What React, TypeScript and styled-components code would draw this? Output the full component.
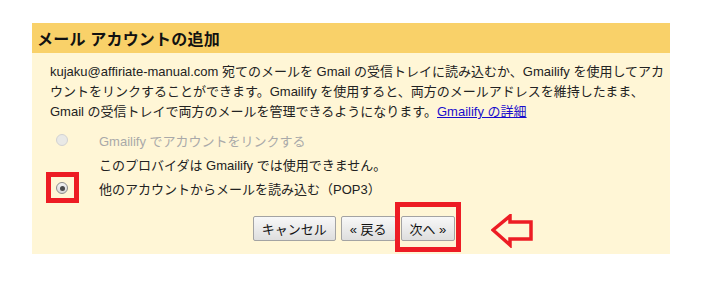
import React from 'react';
import styled, { createGlobalStyle } from 'styled-components';

const GlobalStyle = createGlobalStyle`
  html, body {
    margin: 0;
    padding: 0;
    background: #ffffff;
  }
  body {
    font-family: "Liberation Sans", Arial, "Noto Sans CJK JP", sans-serif;
    color: #222;
  }
`;

const ANNOTATION_RED = '#ed1c24';

// Page and panel
const Page = styled.div`
  padding: 23px 0 0 32px;
  width: 703px;
  height: 304px;
  box-sizing: border-box;
`;

const Panel = styled.section`
  width: 638px;
  background-color: #fff6d6;
`;

const TitleBar = styled.header`
  height: 30px;
  background-color: #f9d169;
  display: flex;
  align-items: center;
  padding-left: 5px;
`;

const Title = styled.h2`
  margin: 0;
  font-size: 16px;
  font-weight: bold;
  color: #111;
  letter-spacing: 0.2px;
`;

const Body = styled.div`
  padding: 9px 0 13px 18px;
`;

const Description = styled.p`
  margin: 0;
  font-size: 13px;
  line-height: 20px;
  color: #222;
`;

const HelpLink = styled.a`
  color: #1a0dcc;
  text-decoration: underline;
  cursor: pointer;
`;

// Options list
const Options = styled.div`
  margin-top: 6px;
  display: flex;
  flex-direction: column;
`;

const OptionRow = styled.div`
  display: grid;
  grid-template-columns: 43px 1fr;
  align-items: center;
  height: 24px;
  padding-left: 6px;
`;

const OptionLabel = styled.span<{ disabled?: boolean }>`
  grid-column: 2;
  font-size: 13px;
  color: ${p => (p.disabled ? '#a9a9a9' : '#222')};
`;

const RadioSlot = styled.span`
  position: relative;
  display: flex;
  align-items: center;
  width: 12px;
  height: 12px;
`;

const Radio = styled.span<{ checked?: boolean; disabled?: boolean }>`
  display: block;
  box-sizing: border-box;
  width: 12px;
  height: 12px;
  border-radius: 50%;
  border: 1px solid ${p => (p.disabled ? '#d2d2d2' : '#8c8c8c')};
  background: ${p =>
    p.disabled ? '#e9e9e6' : 'linear-gradient(#f4f4f4, #d8d8d8)'};
  position: relative;

  &::after {
    content: '';
    display: ${p => (p.checked ? 'block' : 'none')};
    position: absolute;
    left: 2.5px;
    top: 2.5px;
    width: 5px;
    height: 5px;
    border-radius: 50%;
    background: #4a4a4a;
  }
`;

// Red marker boxes drawn over the screenshot
const Highlight = styled.span<{ top: number; left: number; w: number; h: number; border: number }>`
  position: absolute;
  top: ${p => p.top}px;
  left: ${p => p.left}px;
  width: ${p => p.w}px;
  height: ${p => p.h}px;
  box-sizing: border-box;
  border: ${p => p.border}px solid ${ANNOTATION_RED};
  pointer-events: none;
`;

// Buttons
const ButtonRow = styled.div`
  margin-top: 16px;
  display: flex;
  justify-content: center;
  gap: 5px;
  padding-right: 12px;
`;

const ButtonWrap = styled.span`
  position: relative;
  display: inline-flex;
`;

const Button = styled.button`
  height: 25px;
  padding: 0 8px;
  font-family: "Liberation Sans", Arial, "Noto Sans CJK JP", sans-serif;
  font-size: 13px;
  color: #111;
  border: 1px solid #a3a3a3;
  border-radius: 2px;
  background: linear-gradient(#f8f8f8, #dedede);
  cursor: pointer;
  white-space: nowrap;
`;

const ArrowMark = styled.svg`
  position: absolute;
  left: 90px;
  top: -2px;
`;

const BackArrow = () => (
  <ArrowMark width="43" height="34" viewBox="0 0 43 34">
    <path
      d="M2 16 L19 2 L19 8 L40 8 L40 25 L19 25 L19 31 Z"
      fill="none"
      stroke={ANNOTATION_RED}
      strokeWidth="3.5"
      strokeLinejoin="miter"
    />
  </ArrowMark>
);

const App: React.FC = () => {
  return (
    <Page>
      <GlobalStyle />
      <Panel>
        <TitleBar>
          <Title>メール アカウントの追加</Title>
        </TitleBar>
        <Body>
          <Description>
            kujaku@affiriate-manual.com 宛てのメールを Gmail の受信トレイに読み込むか、Gmailify を使用してアカ
            <br />
            ウントをリンクすることができます。Gmailify を使用すると、両方のメールアドレスを維持したまま、
            <br />
            Gmail の受信トレイで両方のメールを管理できるようになります。<HelpLink>Gmailify の詳細</HelpLink>
          </Description>

          <Options>
            <OptionRow>
              <RadioSlot>
                <Radio disabled />
              </RadioSlot>
              <OptionLabel disabled>Gmailify でアカウントをリンクする</OptionLabel>
            </OptionRow>
            <OptionRow>
              <OptionLabel>このプロバイダは Gmailify では使用できません。</OptionLabel>
            </OptionRow>
            <OptionRow>
              <RadioSlot>
                <Radio checked />
                <Highlight top={-10} left={-10} w={33} h={31} border={5} />
              </RadioSlot>
              <OptionLabel>他のアカウントからメールを読み込む（POP3）</OptionLabel>
            </OptionRow>
          </Options>

          <ButtonRow>
            <Button>キャンセル</Button>
            <Button>« 戻る</Button>
            <ButtonWrap>
              <Button>次へ »</Button>
              <Highlight top={-14} left={-6} w={66} h={50} border={5} />
              <BackArrow />
            </ButtonWrap>
          </ButtonRow>
        </Body>
      </Panel>
    </Page>
  );
};

export default App;
